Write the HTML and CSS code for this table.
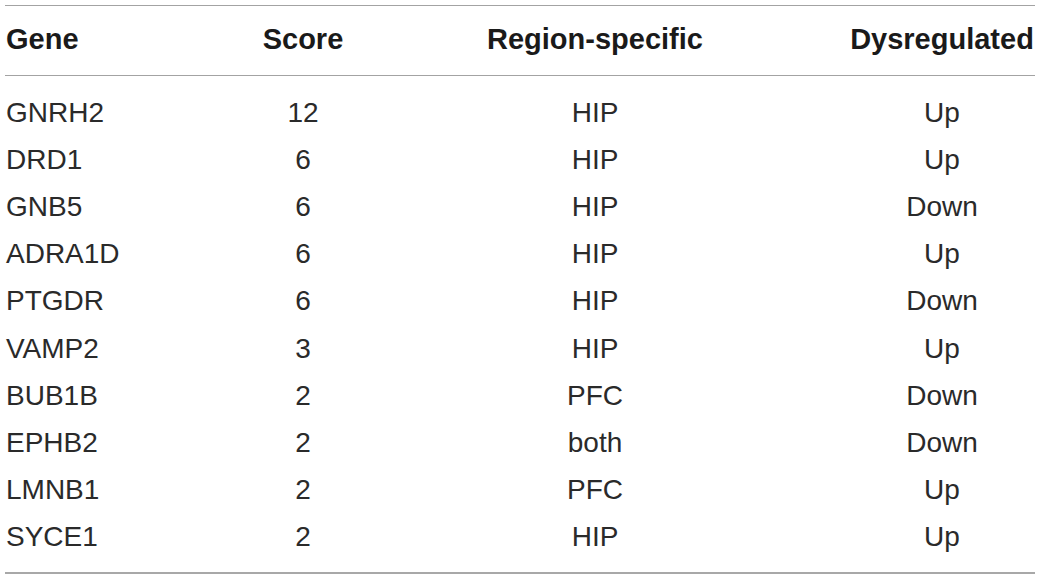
FILE: index.html
```html
<!DOCTYPE html>
<html>
<head>
<meta charset="utf-8">
<link rel="stylesheet" href="styles.css">
</head>
<body>
<div class="table">
  <div class="row head">
    <div class="c1">Gene</div>
    <div class="c2">Score</div>
    <div class="c3">Region-specific</div>
    <div class="c4">Dysregulated</div>
  </div>
  <div class="body">
    <div class="row"><div class="c1">GNRH2</div><div class="c2">12</div><div class="c3">HIP</div><div class="c4">Up</div></div>
    <div class="row"><div class="c1">DRD1</div><div class="c2">6</div><div class="c3">HIP</div><div class="c4">Up</div></div>
    <div class="row"><div class="c1">GNB5</div><div class="c2">6</div><div class="c3">HIP</div><div class="c4">Down</div></div>
    <div class="row"><div class="c1">ADRA1D</div><div class="c2">6</div><div class="c3">HIP</div><div class="c4">Up</div></div>
    <div class="row"><div class="c1">PTGDR</div><div class="c2">6</div><div class="c3">HIP</div><div class="c4">Down</div></div>
    <div class="row"><div class="c1">VAMP2</div><div class="c2">3</div><div class="c3">HIP</div><div class="c4">Up</div></div>
    <div class="row"><div class="c1">BUB1B</div><div class="c2">2</div><div class="c3">PFC</div><div class="c4">Down</div></div>
    <div class="row"><div class="c1">EPHB2</div><div class="c2">2</div><div class="c3">both</div><div class="c4">Down</div></div>
    <div class="row"><div class="c1">LMNB1</div><div class="c2">2</div><div class="c3">PFC</div><div class="c4">Up</div></div>
    <div class="row"><div class="c1">SYCE1</div><div class="c2">2</div><div class="c3">HIP</div><div class="c4">Up</div></div>
  </div>
</div>
</body>
</html>
```
FILE: styles.css
```css
html, body {
  margin: 0;
  padding: 0;
  background: #ffffff;
}
body {
  padding: 5px 5px 0 5px;
  font-family: "Liberation Sans", Arial, sans-serif;
  font-size: 28px;
  color: #2a2a2a;
}
.table {
  width: 1030px;
  border-top: 1px solid #a3a3a3;
  border-bottom: 2px solid #a8a8a8;
}
.row {
  display: grid;
  grid-template-columns: 215px 166px 463px 186px;
  align-items: center;
  height: 47.2px;
}
.row > div {
  white-space: nowrap;
}
.c1 { text-align: left; padding-left: 1px; }
.c2 { text-align: center; }
.c3 { text-align: center; padding-right: 45px; }
.c4 { text-align: center; }
.head {
  height: 70px;
  padding-bottom: 2px;
  box-sizing: border-box;
  font-size: 29px;
  font-weight: bold;
  color: #1a1a1a;
  border-bottom: 1px solid #a3a3a3;
}
.body {
  padding: 13px 0 11px 0;
}
```
